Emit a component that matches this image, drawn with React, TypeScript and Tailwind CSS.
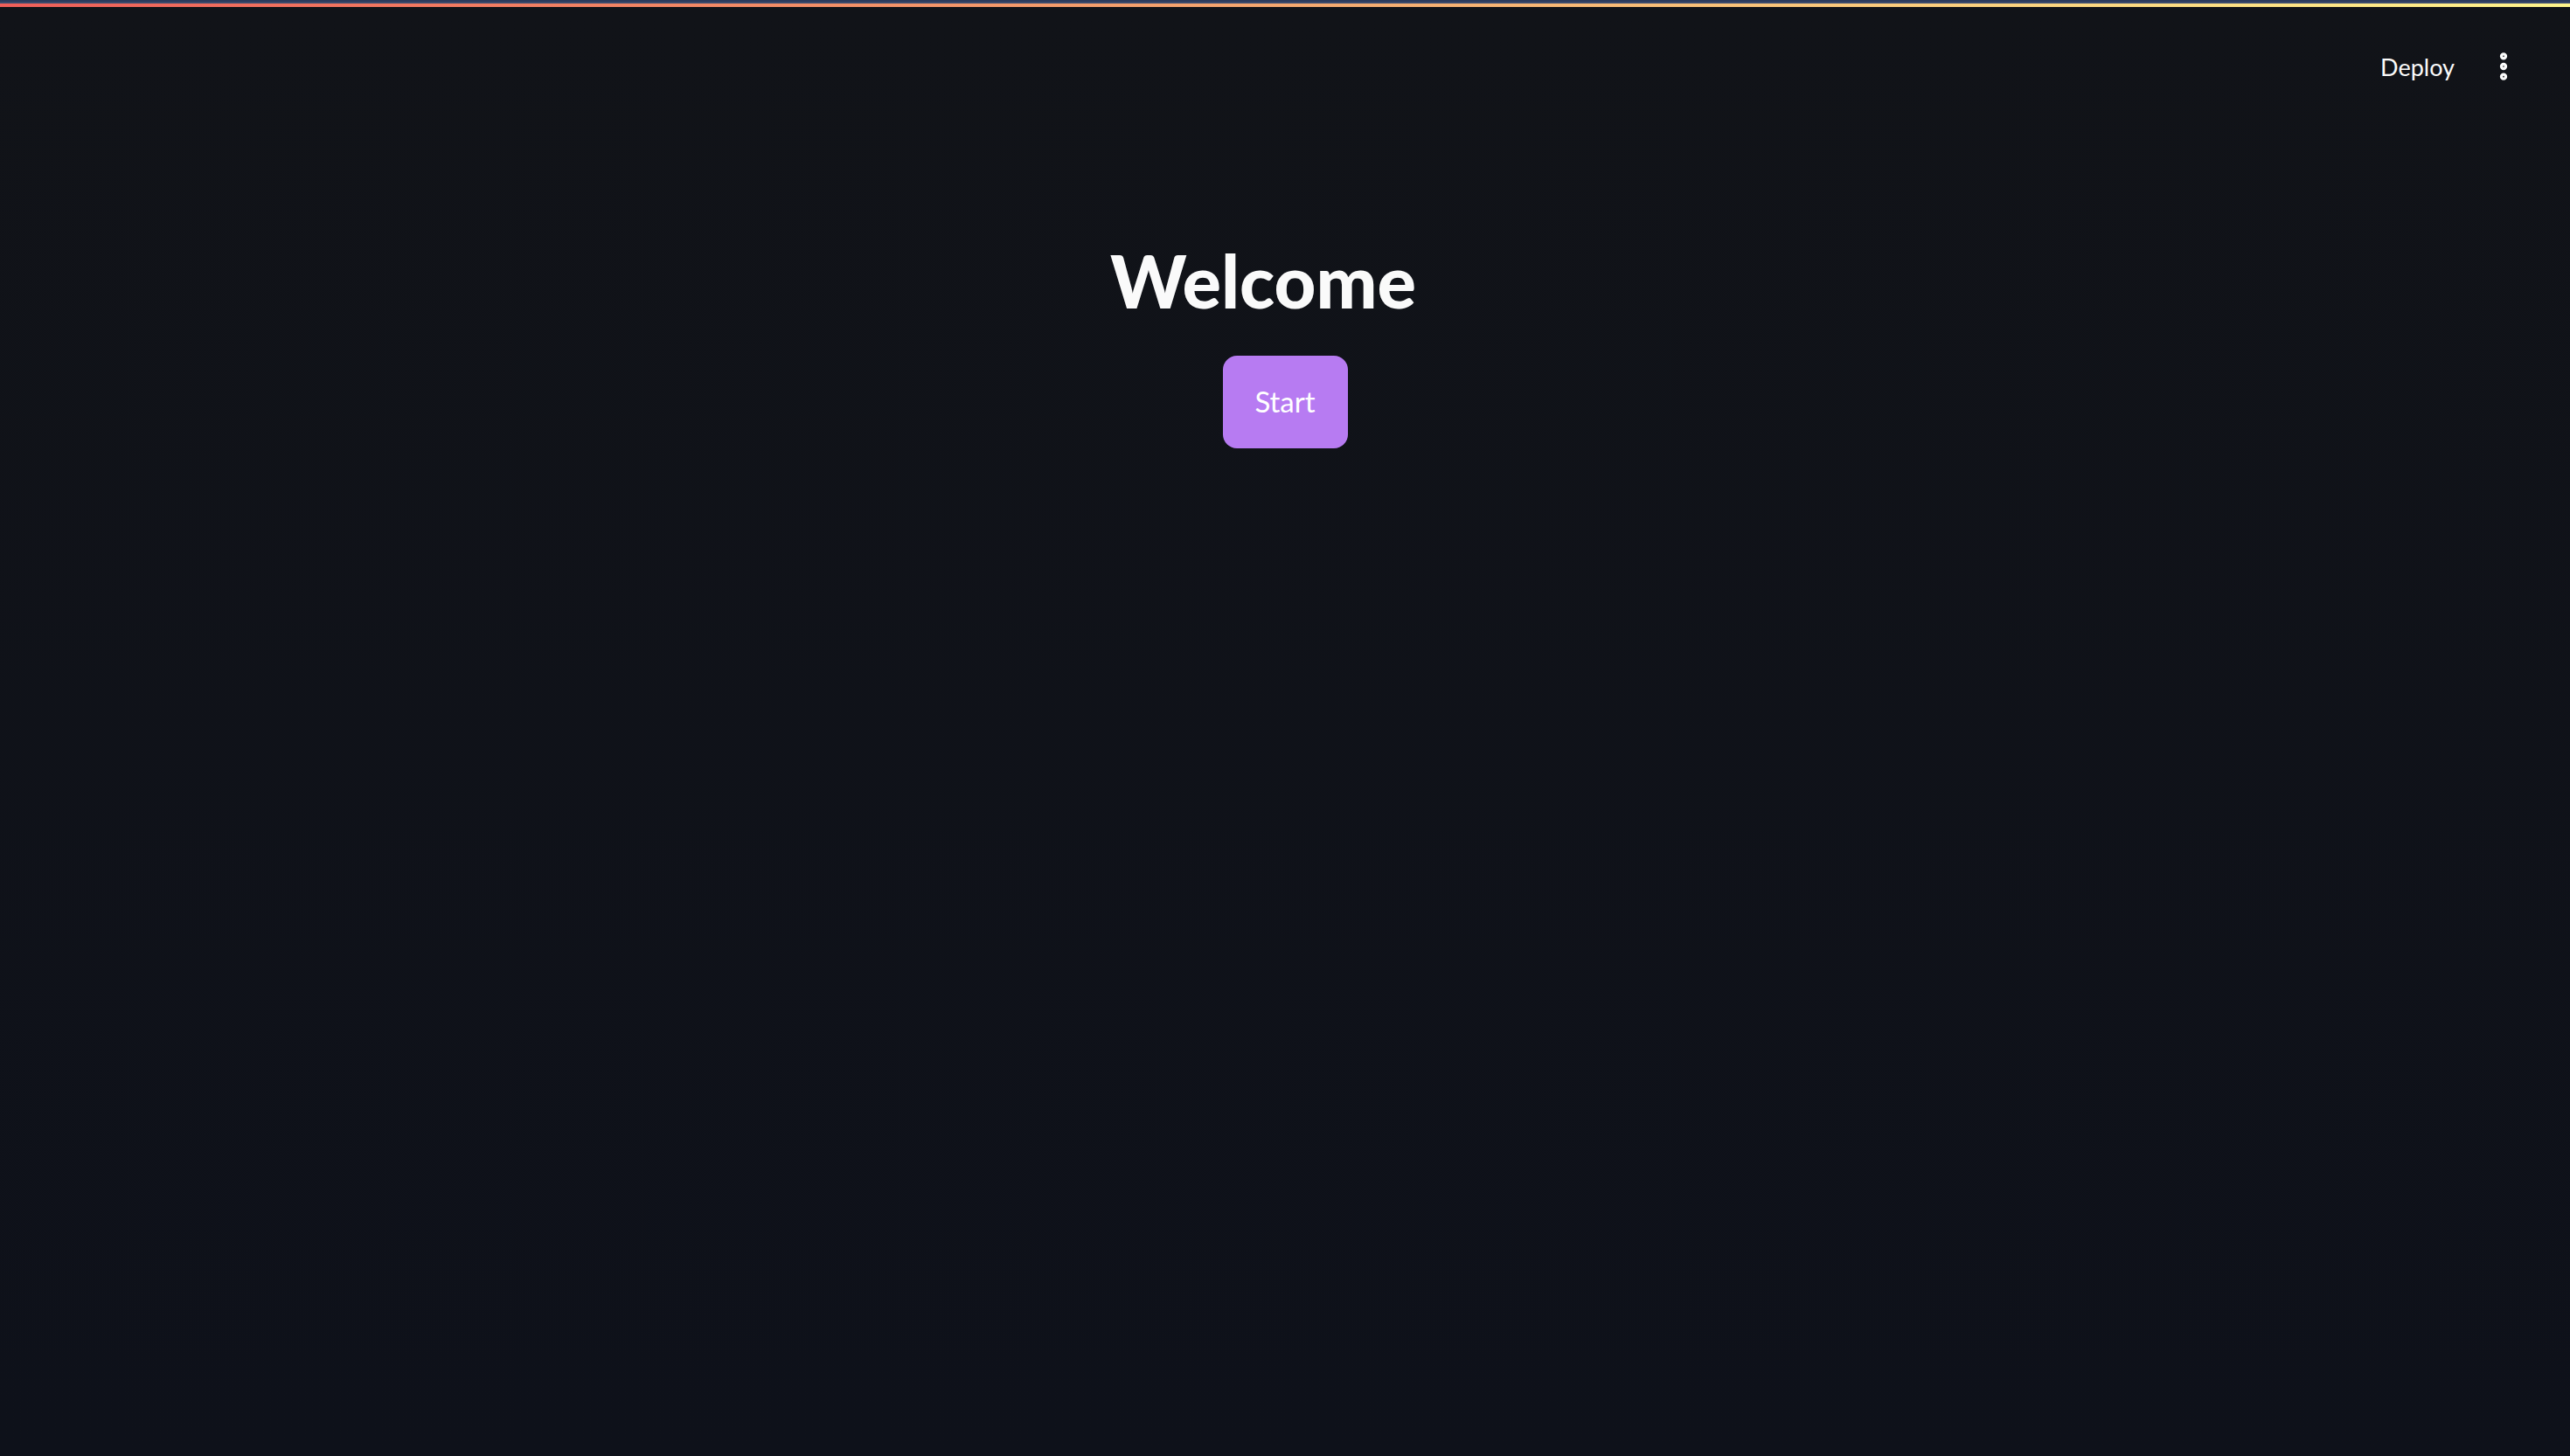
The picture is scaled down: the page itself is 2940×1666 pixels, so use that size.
import { EllipsisVertical } from 'lucide-react';

const font = { fontFamily: '"Source Sans Pro", "Noto Sans", "Open Sans", sans-serif' };

function TopBar() {
  return (
    <div className="flex flex-col">
      <div className="h-[2px] bg-[#2b3a5c]" />
      <div className="h-[2px] bg-[#3b4a6c]" />
      <div className="h-[4px] bg-gradient-to-r from-[#ef5f5a] via-[#f5a870] to-[#fff48c]" />
    </div>
  );
}

function Header() {
  return (
    <div className="flex items-center justify-end gap-[36px] pr-[56px] pt-[48px]">
      <button type="button" className="text-[27px] leading-none text-[#fafafa]" style={{ fontFamily: '"Source Sans Pro", Lato, sans-serif' }}>
        Deploy
      </button>
      <EllipsisVertical className="w-[40px] h-[40px] text-[#fafafa]" strokeWidth={3} />
    </div>
  );
}

export default function App() {
  return (
    <div className="w-full h-[1666px] bg-gradient-to-b from-[#111318] to-[#0e111a] flex flex-col" style={font}>
      <TopBar />
      <Header />
      <main className="flex flex-col items-center pt-[184px]">
        <h1 className="text-[83px] leading-none text-[#fafafa] pr-[50px]" style={{ fontFamily: 'Lato, sans-serif', fontWeight: 900 }}>
          Welcome
        </h1>
        <button
          type="button"
          className="mt-[44px] w-[143px] h-[106px] rounded-[16px] bg-[#b77bf2] text-[33px] text-white"
          style={{ fontFamily: 'Lato, sans-serif' }}
        >
          Start
        </button>
      </main>
    </div>
  );
}
